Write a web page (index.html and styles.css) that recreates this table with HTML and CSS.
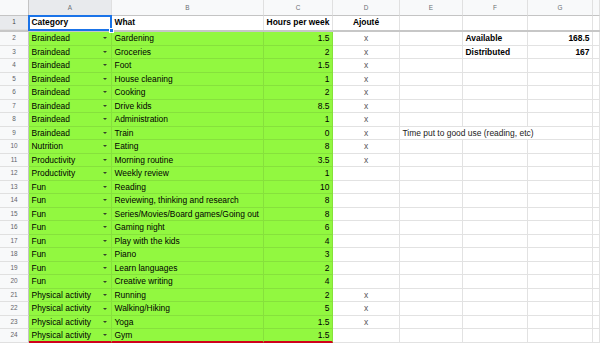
FILE: index.html
```html
<!DOCTYPE html>
<html>
<head>
<meta charset="utf-8">
<link rel="stylesheet" href="styles.css">
</head>
<body>
<div class="sheet">
  <div class="row head">
    <div class="rn corner"></div>
    <div class="ch sel">A</div><div class="ch">B</div><div class="ch">C</div><div class="ch">D</div><div class="ch">E</div><div class="ch">F</div><div class="ch">G</div><div class="ch"></div>
  </div>
  <div class="row r1">
    <div class="rn sel">1</div>
    <div class="c b active">Category</div><div class="c b">What</div><div class="c b ctr">Hours per week</div><div class="c b ctr">Ajouté</div><div class="c"></div><div class="c"></div><div class="c"></div><div class="c"></div>
  </div>
  <div class="row"><div class="rn">2</div><div class="c g dd">Braindead<i></i></div><div class="c g">Gardening</div><div class="c g num">1.5</div><div class="c x">x</div><div class="c"></div><div class="c b">Available</div><div class="c b num">168.5</div><div class="c"></div></div>
  <div class="row"><div class="rn">3</div><div class="c g dd">Braindead<i></i></div><div class="c g">Groceries</div><div class="c g num">2</div><div class="c x">x</div><div class="c"></div><div class="c b">Distributed</div><div class="c b num">167</div><div class="c"></div></div>
  <div class="row"><div class="rn">4</div><div class="c g dd">Braindead<i></i></div><div class="c g">Foot</div><div class="c g num">1.5</div><div class="c x">x</div><div class="c"></div><div class="c"></div><div class="c"></div><div class="c"></div></div>
  <div class="row"><div class="rn">5</div><div class="c g dd">Braindead<i></i></div><div class="c g">House cleaning</div><div class="c g num">1</div><div class="c x">x</div><div class="c"></div><div class="c"></div><div class="c"></div><div class="c"></div></div>
  <div class="row"><div class="rn">6</div><div class="c g dd">Braindead<i></i></div><div class="c g">Cooking</div><div class="c g num">2</div><div class="c x">x</div><div class="c"></div><div class="c"></div><div class="c"></div><div class="c"></div></div>
  <div class="row"><div class="rn">7</div><div class="c g dd">Braindead<i></i></div><div class="c g">Drive kids</div><div class="c g num">8.5</div><div class="c x">x</div><div class="c"></div><div class="c"></div><div class="c"></div><div class="c"></div></div>
  <div class="row"><div class="rn">8</div><div class="c g dd">Braindead<i></i></div><div class="c g">Administration</div><div class="c g num">1</div><div class="c x">x</div><div class="c"></div><div class="c"></div><div class="c"></div><div class="c"></div></div>
  <div class="row"><div class="rn">9</div><div class="c g dd">Braindead<i></i></div><div class="c g">Train</div><div class="c g num">0</div><div class="c x">x</div><div class="c span3">Time put to good use (reading, etc)</div><div class="c"></div></div>
  <div class="row"><div class="rn">10</div><div class="c g dd">Nutrition<i></i></div><div class="c g">Eating</div><div class="c g num">8</div><div class="c x">x</div><div class="c"></div><div class="c"></div><div class="c"></div><div class="c"></div></div>
  <div class="row"><div class="rn">11</div><div class="c g dd">Productivity<i></i></div><div class="c g">Morning routine</div><div class="c g num">3.5</div><div class="c x">x</div><div class="c"></div><div class="c"></div><div class="c"></div><div class="c"></div></div>
  <div class="row"><div class="rn">12</div><div class="c g dd">Productivity<i></i></div><div class="c g">Weekly review</div><div class="c g num">1</div><div class="c x"></div><div class="c"></div><div class="c"></div><div class="c"></div><div class="c"></div></div>
  <div class="row"><div class="rn">13</div><div class="c g dd">Fun<i></i></div><div class="c g">Reading</div><div class="c g num">10</div><div class="c x"></div><div class="c"></div><div class="c"></div><div class="c"></div><div class="c"></div></div>
  <div class="row"><div class="rn">14</div><div class="c g dd">Fun<i></i></div><div class="c g">Reviewing, thinking and research</div><div class="c g num">8</div><div class="c x"></div><div class="c"></div><div class="c"></div><div class="c"></div><div class="c"></div></div>
  <div class="row"><div class="rn">15</div><div class="c g dd">Fun<i></i></div><div class="c g">Series/Movies/Board games/Going out</div><div class="c g num">8</div><div class="c x"></div><div class="c"></div><div class="c"></div><div class="c"></div><div class="c"></div></div>
  <div class="row"><div class="rn">16</div><div class="c g dd">Fun<i></i></div><div class="c g">Gaming night</div><div class="c g num">6</div><div class="c x"></div><div class="c"></div><div class="c"></div><div class="c"></div><div class="c"></div></div>
  <div class="row"><div class="rn">17</div><div class="c g dd">Fun<i></i></div><div class="c g">Play with the kids</div><div class="c g num">4</div><div class="c x"></div><div class="c"></div><div class="c"></div><div class="c"></div><div class="c"></div></div>
  <div class="row"><div class="rn">18</div><div class="c g dd">Fun<i></i></div><div class="c g">Piano</div><div class="c g num">3</div><div class="c x"></div><div class="c"></div><div class="c"></div><div class="c"></div><div class="c"></div></div>
  <div class="row"><div class="rn">19</div><div class="c g dd">Fun<i></i></div><div class="c g">Learn languages</div><div class="c g num">2</div><div class="c x"></div><div class="c"></div><div class="c"></div><div class="c"></div><div class="c"></div></div>
  <div class="row"><div class="rn">20</div><div class="c g dd">Fun<i></i></div><div class="c g">Creative writing</div><div class="c g num">4</div><div class="c x"></div><div class="c"></div><div class="c"></div><div class="c"></div><div class="c"></div></div>
  <div class="row"><div class="rn">21</div><div class="c g dd">Physical activity<i></i></div><div class="c g">Running</div><div class="c g num">2</div><div class="c x">x</div><div class="c"></div><div class="c"></div><div class="c"></div><div class="c"></div></div>
  <div class="row"><div class="rn">22</div><div class="c g dd">Physical activity<i></i></div><div class="c g">Walking/Hiking</div><div class="c g num">5</div><div class="c x">x</div><div class="c"></div><div class="c"></div><div class="c"></div><div class="c"></div></div>
  <div class="row"><div class="rn">23</div><div class="c g dd">Physical activity<i></i></div><div class="c g">Yoga</div><div class="c g num">1.5</div><div class="c x">x</div><div class="c"></div><div class="c"></div><div class="c"></div><div class="c"></div></div>
  <div class="row"><div class="rn">24</div><div class="c g dd red">Physical activity<i></i></div><div class="c g red">Gym</div><div class="c g num red">1.5</div><div class="c x"></div><div class="c"></div><div class="c"></div><div class="c"></div><div class="c"></div></div>
</div>
</body>
</html>
```

FILE: styles.css
```css
html, body {
  margin: 0;
  padding: 0;
  background: #ffffff;
}
body {
  width: 600px;
  height: 344px;
  overflow: hidden;
}
.sheet {
  font-family: "Liberation Sans", Arial, sans-serif;
  font-size: 8.45px;
  color: #000;
}
.row {
  display: grid;
  grid-template-columns: 29px 83px 152px 69px 67px 63px 65px 65px 1fr;
  height: 13.52px;
}
.row > div {
  box-sizing: border-box;
  min-width: 0;
}
.head {
  height: 16px;
}
.r1 {
  height: 16px;
  border-bottom: 2.5px solid #c7c7c7;
  box-sizing: border-box;
}
.rn {
  background: #f8f9fa;
  border-right: 1px solid #c4c4c4;
  border-bottom: 1px solid #e0e0e0;
  color: #5f6368;
  font-size: 6.4px;
  text-align: center;
  line-height: 12.5px;
}
.rn.sel {
  background: #e8eaed;
  color: #444;
}
.corner {
  border-bottom: 1px solid #c4c4c4;
}
.ch {
  background: #f8f9fa;
  border-right: 1px solid #e0e0e0;
  border-bottom: 1px solid #c4c4c4;
  color: #6b6f73;
  font-size: 6.4px;
  text-align: center;
  line-height: 15px;
}
.ch.sel {
  background: #e8eaed;
}
.head .rn {
  line-height: 15px;
}
.c {
  border-right: 1px solid #e2e2e2;
  border-bottom: 1px solid #e2e2e2;
  padding: 0 2.5px;
  line-height: 12.5px;
  white-space: nowrap;
  overflow: hidden;
}
.r1 .c {
  border-bottom: none;
  line-height: 13.5px;
}
.b {
  font-weight: bold;
}
.ctr {
  text-align: center;
}
.num {
  text-align: right;
}
.x {
  text-align: center;
  color: #555;
}
.g {
  background: #92f840;
  border-right-color: #86e13c;
  border-bottom-color: #86e13c;
}
.dd {
  display: flex;
  justify-content: space-between;
  align-items: center;
}
.dd i {
  display: block;
  width: 0;
  height: 0;
  border-left: 2.5px solid transparent;
  border-right: 2.5px solid transparent;
  border-top: 2.5px solid #34402a;
  margin-right: 1.5px;
}
.span3 {
  grid-column: span 3;
  overflow: visible;
  color: #222;
}
.red {
  border-bottom: 2px solid #d0021b;
}
.active {
  position: relative;
  overflow: visible;
}
.active::before {
  content: "";
  position: absolute;
  left: -1px;
  top: -1px;
  right: -1px;
  bottom: -1px;
  border: 2px solid #1a73e8;
  pointer-events: none;
}
.active::after {
  content: "";
  position: absolute;
  right: -3px;
  bottom: -3px;
  width: 5px;
  height: 5px;
  background: #1a73e8;
  border: 1px solid #fff;
  box-sizing: border-box;
}
```
